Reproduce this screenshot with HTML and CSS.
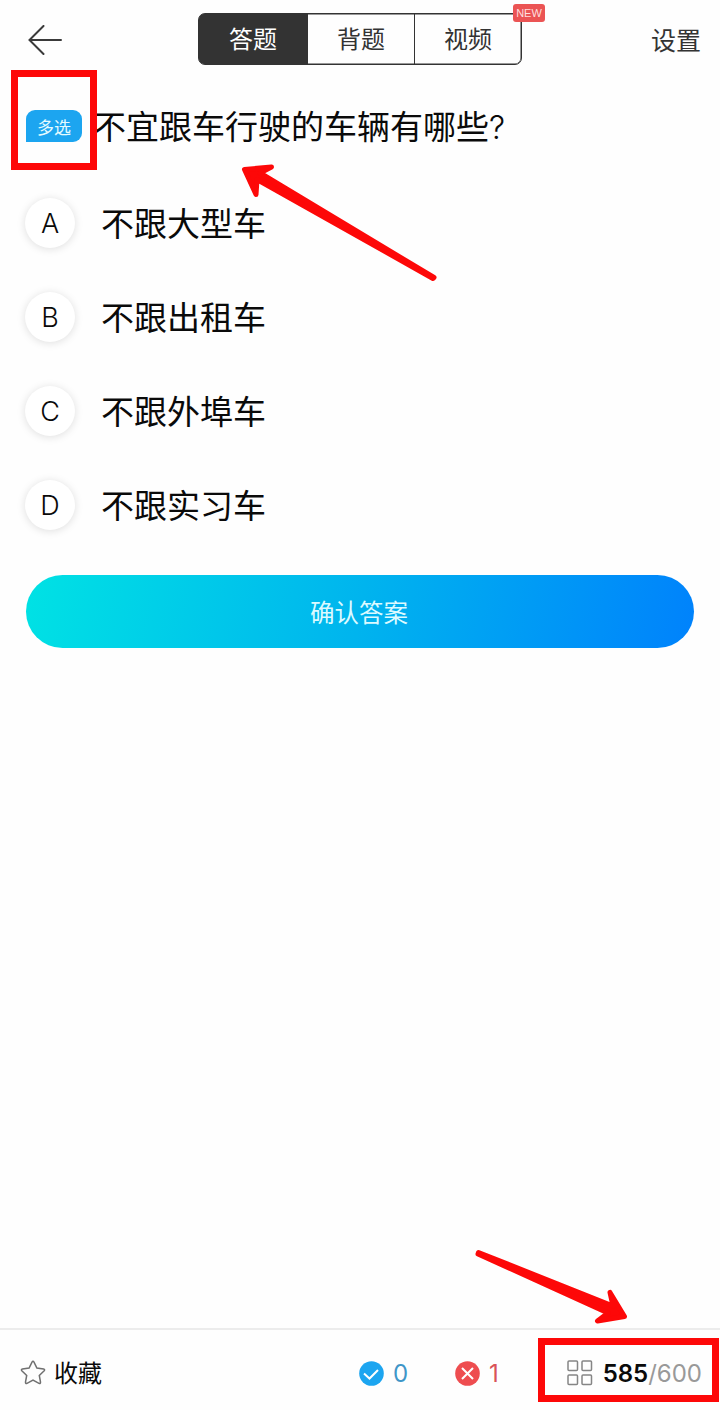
FILE: index.html
```html
<!DOCTYPE html>
<html lang="zh-CN">
<head>
  <meta charset="UTF-8">
  <title>答题</title>
  <meta name="viewport" content="width=device-width, initial-scale=1">
  <link rel="stylesheet" href="styles.css">
</head>
<body>

<header class="header">
  <svg class="back" viewBox="0 0 34 30">
    <path d="M33 15H1.500M15.500 1L1.500 15l14 14"/>
  </svg>
  <div class="tabs">
    <div class="tab active">答题</div>
    <div class="tab">背题</div>
    <div class="tab">视频</div>
    <span class="new">NEW</span>
  </div>
  <div class="settings">设置</div>
</header>

<main class="content">
  <div class="question">
    <span class="type">多选<i class="mark mark-type"></i></span>
    <h1 class="title">不宜跟车行驶的车辆有哪些<span class="qmark">?</span></h1>
  </div>

  <div class="options">
    <div class="option"><span class="letter">A</span><span class="text">不跟大型车</span></div>
    <div class="option"><span class="letter">B</span><span class="text">不跟出租车</span></div>
    <div class="option"><span class="letter">C</span><span class="text">不跟外埠车</span></div>
    <div class="option"><span class="letter">D</span><span class="text">不跟实习车</span></div>
  </div>

  <button class="submit">确认答案</button>
</main>

<footer class="footer">
  <div class="favorite">
    <svg class="star" viewBox="0 0 26 26">
      <path d="M12 2.100q1-1.600 2 0l2.900 6 6.700 1q1.700.4.600 1.700l-4.900 4.700 1.200 6.700q.1 1.700-1.500 1.100L13 20.200l-6 3.100q-1.600.6-1.500-1.100l1.200-6.700-4.900-4.700Q.7 9.500 2.400 9.100l6.700-1z"/>
    </svg>
    <span>收藏</span>
  </div>
  <div class="count right">
    <svg viewBox="0 0 25 25"><circle cx="12.500" cy="12.500" r="12.300"/><path d="M5 12.500l5.500 5 8.500-8.500"/></svg>
    <span>0</span>
  </div>
  <div class="count wrong">
    <svg viewBox="0 0 25 25"><circle cx="12.500" cy="12.500" r="12.300"/><path d="M7 7l11 11M18 7L7 18"/></svg>
    <span>1</span>
  </div>
  <div class="progress">
    <svg class="grid" viewBox="0 0 26 26">
      <rect x="1" y="1" width="9.500" height="9.500" rx="1"/>
      <rect x="15" y="1" width="9.500" height="9.500" rx="1"/>
      <rect x="1" y="15" width="9.500" height="9.500" rx="1"/>
      <rect x="15" y="15" width="9.500" height="9.500" rx="1"/>
    </svg>
    <b>585</b><span class="total">/600</span>
    <i class="mark mark-progress"></i>
  </div>
</footer>

<!-- hand-drawn style pointers over the page -->
<svg class="arrows" viewBox="0 0 720 1410">
  <path d="M244.500 169.500L271.500 167L260 173L434 277.500L433 278.500L257 179.500L256 194.500Z"/>
  <path d="M478.500 1252.500L478 1254L608 1313L597.500 1321L624.500 1316.500L610 1292.500L613 1306Z"/>
</svg>

</body>
</html>
```

FILE: styles.css
```css
* {
  box-sizing: border-box;
}

body {
  position: relative;
  display: flex;
  flex-direction: column;
  height: 1410px;
  margin: 0;
  background: #fefefe;
  color: #0a0a0a;
  font-family: "Noto Sans CJK SC", sans-serif;
}

svg {
  display: block;
  flex: none;
}

/* header */
.header {
  display: flex;
  align-items: center;
  height: 78px;
  padding: 0 19px 0 28px;
}

.back {
  width: 34px;
  height: 30px;
  margin-top: 1px;
  fill: none;
  stroke: #3a3a3a;
  stroke-width: 2;
  stroke-linecap: round;
}

.tabs {
  position: relative;
  display: flex;
  width: 324px;
  height: 52px;
  margin-left: 136px;
  border: 1px solid #333;
  border-radius: 7px;
  box-shadow: inset 0 0 0 0.500px #333;
}

.tab {
  width: 108px;
  color: #333;
  font-size: 24px;
  line-height: 48px;
  text-align: center;
}

.tab + .tab {
  border-left: 1px solid #333;
}

.tab.active {
  width: 109px;
  border-radius: 5px 0 0 5px;
  background: #333;
  color: #fff;
}

.new {
  position: absolute;
  top: -10px;
  right: -24px;
  width: 32px;
  height: 18px;
  border-radius: 3px;
  background: #eb5454;
  color: #ffdede;
  font: 11px/19px "Liberation Sans", sans-serif;
  text-align: center;
}

.settings {
  margin-left: auto;
  color: #333;
  font-size: 25px;
  line-height: 36px;
}

/* question */
.content {
  flex: 1;
  padding: 24px 26px 0;
}

.question {
  display: flex;
  align-items: center;
  height: 48px;
}

.type {
  position: relative;
  width: 56px;
  height: 32px;
  border-radius: 9px 9px 9px 0;
  background: #1ca5f0;
  color: #e4fbff;
  font-size: 17px;
  line-height: 33px;
  text-align: center;
}

.title {
  margin: 0 0 0 11px;
  font-size: 33px;
  font-weight: 400;
  line-height: 48px;
}

.qmark {
  font-family: Inter, "Liberation Sans", sans-serif;
  font-size: 32px;
  font-weight: 300;
}

.options {
  padding-top: 26px;
}

.option {
  display: flex;
  align-items: center;
  gap: 26px;
  height: 94px;
  margin-left: -1px;
  font-size: 33px;
}

.text {
  padding-bottom: 3px;
}

.letter {
  width: 50px;
  height: 50px;
  border-radius: 50%;
  background: #fff;
  box-shadow: 0 1px 8px rgba(0, 0, 0, 0.13);
  font-family: Inter, "Liberation Sans", sans-serif;
  font-size: 27px;
  font-weight: 300;
  line-height: 52px;
  text-align: center;
}

.submit {
  display: block;
  width: 668px;
  height: 73px;
  padding: 0 2px 0 0;
  margin-top: 23px;
  border: none;
  border-radius: 37px;
  background: linear-gradient(100deg, #00e2e4, #00b4ee 50%, #0082fc);
  color: #dcfaff;
  font-family: inherit;
  font-size: 24.500px;
}

/* bottom bar */
.footer {
  display: flex;
  align-items: center;
  height: 82px;
  padding: 6px 18px 0 20px;
  border-top: 2px solid #ececec;
}

.favorite {
  display: flex;
  align-items: center;
  gap: 8px;
  width: 339px;
  font-size: 24px;
}

.favorite span {
  padding-bottom: 4px;
}

.star {
  width: 26px;
  height: 26px;
  fill: none;
  stroke: #707070;
  stroke-width: 1.500;
}

.count {
  display: flex;
  align-items: center;
  gap: 9px;
  width: 96px;
  font-family: Inter, "Liberation Sans", sans-serif;
  font-size: 24px;
}

.count svg {
  width: 25px;
  height: 25px;
}

.count path {
  fill: none;
  stroke: #fff;
  stroke-width: 2;
}

.right {
  color: #3f96c8;
  fill: #1ca5f0;
}

.wrong {
  color: #d95358;
  fill: #ee4d50;
}

.progress {
  position: relative;
  display: flex;
  align-items: center;
  margin-left: auto;
  font-family: Inter, "Liberation Sans", sans-serif;
  font-size: 24px;
}

.progress b {
  font-weight: 600;
}

.grid {
  width: 26px;
  height: 26px;
  margin-right: 10px;
  fill: none;
  stroke: #858585;
  stroke-width: 1.500;
}

.total {
  color: #999;
}

/* red marks */
.mark {
  position: absolute;
  border: 7px solid #fd0808;
}

.mark-type {
  top: -40px;
  left: -15px;
  width: 86px;
  height: 100px;
}

.mark-progress {
  top: -21px;
  right: -17px;
  width: 181px;
  height: 64px;
}

.arrows {
  position: absolute;
  top: 0;
  left: 0;
  width: 720px;
  height: 1410px;
  fill: #fd0808;
  stroke: #fd0808;
  stroke-width: 5;
  stroke-linejoin: round;
  pointer-events: none;
}
```
